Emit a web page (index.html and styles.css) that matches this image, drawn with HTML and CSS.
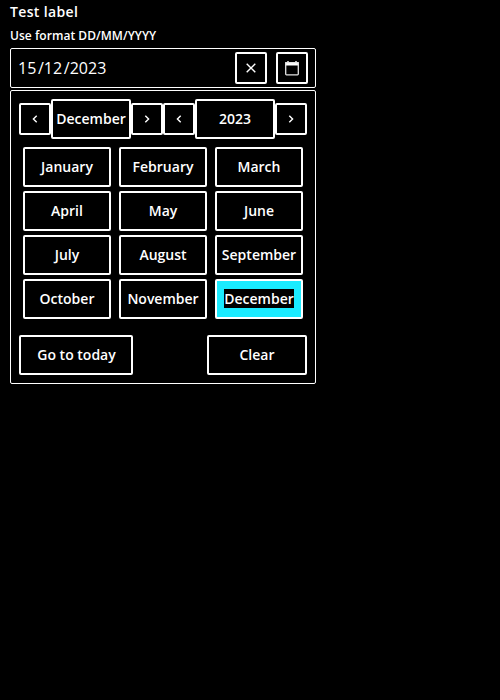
FILE: index.html
```
<!DOCTYPE html>
<html lang="en">
<head>
<meta charset="utf-8">
<title>Date picker</title>
<link rel="stylesheet" href="styles.css">
</head>
<body>
<div class="field">
  <label class="label">Test label</label>
  <div class="hint">Use format DD/MM/YYYY</div>
  <div class="input">
    <div class="date"><span>15</span><span class="sep">/</span><span>12</span><span class="sep">/</span><span>2023</span></div>
    <button class="btn icon" aria-label="Clear date"><svg width="16" height="16" viewBox="0 0 16 16"><path d="M3.7 3.7l8.6 8.6M12.3 3.7l-8.6 8.6" fill="none" stroke="#fff" stroke-width="1.4"/></svg></button>
    <button class="btn icon" aria-label="Open calendar"><svg width="16" height="16" viewBox="0 0 16 16"><path d="M4 .9v2M12 .9v2" stroke="#fff" stroke-width="1.4"/><path d="M1.2 2.1h13.6v3.4H1.2z" fill="#fff"/><rect x="1.7" y="2.6" width="12.6" height="12.2" rx=".8" fill="none" stroke="#e4e4e4" stroke-width="1.3"/></svg></button>
  </div>
  <div class="panel">
    <div class="nav">
      <button class="btn icon" aria-label="Previous month"><svg width="16" height="16" viewBox="0 0 16 16"><path d="M9.7 4.7L6.4 8l3.3 3.3" class="chevron"/></svg></button>
      <button class="btn current"><span>December</span></button>
      <button class="btn icon" aria-label="Next month"><svg width="16" height="16" viewBox="0 0 16 16"><path d="M6.3 4.7L9.6 8l-3.3 3.3" class="chevron"/></svg></button>
      <button class="btn icon" aria-label="Previous year"><svg width="16" height="16" viewBox="0 0 16 16"><path d="M9.7 4.7L6.4 8l3.3 3.3" class="chevron"/></svg></button>
      <button class="btn current"><span>2023</span></button>
      <button class="btn icon" aria-label="Next year"><svg width="16" height="16" viewBox="0 0 16 16"><path d="M6.3 4.7L9.6 8l-3.3 3.3" class="chevron"/></svg></button>
    </div>
    <div class="months">
      <button class="btn"><span>January</span></button><button class="btn"><span>February</span></button><button class="btn"><span>March</span></button>
      <button class="btn"><span>April</span></button><button class="btn"><span>May</span></button><button class="btn"><span>June</span></button>
      <button class="btn"><span>July</span></button><button class="btn"><span>August</span></button><button class="btn"><span>September</span></button>
      <button class="btn"><span>October</span></button><button class="btn"><span>November</span></button><button class="btn selected"><span>December</span></button>
    </div>
    <div class="footer">
      <button class="btn today"><span>Go to today</span></button>
      <button class="btn clear"><span>Clear</span></button>
    </div>
  </div>
</div>
</body>
</html>
```
FILE: styles.css
```
* { box-sizing: border-box; }
body {
  margin: 0;
  background: #000;
  color: #fff;
  font-family: "Open Sans", sans-serif;
}
.field { width: 306px; margin-left: 10px; }
.label { display: block; height: 24px; font-size: 14px; line-height: 24px; font-weight: 600; letter-spacing: .35px; }
.hint { height: 24px; font-size: 12px; line-height: 23px; font-weight: 600; letter-spacing: .04px; }
.input {
  display: flex;
  align-items: center;
  height: 40px;
  padding: 0 7px;
  border: 1px solid #fff;
  border-radius: 2px;
}
.date { flex: 1; display: flex; font-size: 16px; line-height: 24px; }
.sep { padding-left: 1.7px; }
.input .btn + .btn { margin-left: 9px; }
.btn {
  display: flex;
  align-items: center;
  justify-content: center;
  height: 40px;
  padding: 0;
  border: 2px solid #fff;
  border-radius: 2px;
  background: #000;
  color: #fff;
  font: 600 14px/19px "Open Sans", sans-serif;
  white-space: nowrap;
}
.btn span { margin-bottom: 2px; }
.icon { width: 32px; height: 32px; flex: none; }
.chevron { fill: none; stroke: #fff; stroke-width: 1.4; }
.panel {
  height: 294px;
  margin-top: 2px;
  padding: 8px;
  border: 1px solid #fff;
  border-radius: 2px;
}
.nav { display: flex; align-items: center; }
.current { width: 80px; }
.months {
  display: grid;
  grid-template-columns: repeat(3, 88px);
  gap: 4px 8px;
  margin: 8px 4px 16px;
}
.selected { background: #1aebff; }
.selected span { background: #000; }
.footer { display: flex; justify-content: space-between; }
.today { width: 114px; padding-left: 1px; }
.clear { width: 100px; }
```
